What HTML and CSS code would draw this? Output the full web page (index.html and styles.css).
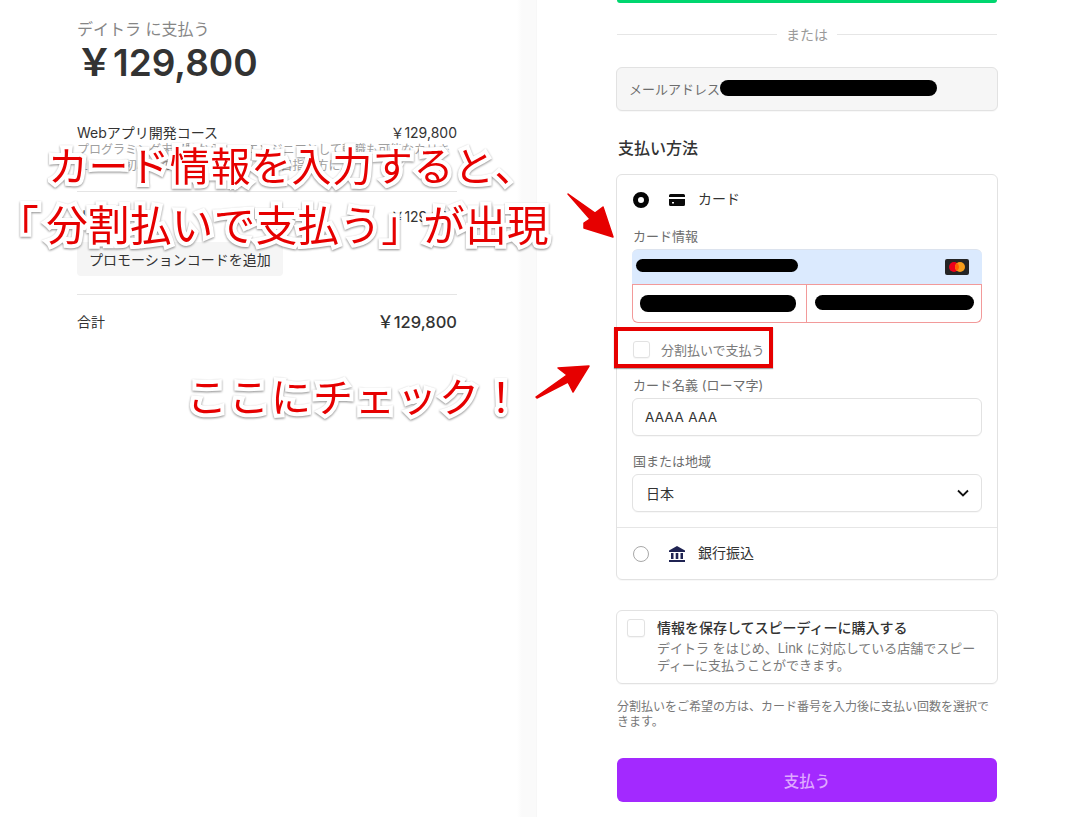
FILE: index.html
```html
<!DOCTYPE html>
<html lang="ja">
<head>
<meta charset="utf-8">
<title>デイトラ 支払い</title>
<link rel="stylesheet" href="styles.css">
</head>
<body>
<div class="page">
  <section class="summary">
    <p class="pay-to">デイトラ に支払う</p>
    <p class="total-big">￥129,800</p>
    <div class="item">
      <div class="row"><span>Webアプリ開発コース</span><span>￥129,800</span></div>
      <p class="item-desc">プログラミング未経験からWebエンジニアとして転職も可能なカリキュラム。初心者の方やフリーランスを目指す方に…</p>
    </div>
    <div class="subtotal">
      <div class="row"><span>小計</span><span>￥129,800</span></div>
      <button class="promo">プロモーションコードを追加</button>
    </div>
    <div class="row grand"><span>合計</span><span class="grand-price">￥129,800</span></div>
  </section>

  <section class="checkout">
    <div class="wallet-bar"></div>
    <div class="or"><span>または</span></div>
    <div class="email">メールアドレス<span class="redact redact-email"></span></div>
    <h2 class="method-title">支払い方法</h2>
    <div class="methods">
      <div class="method-head">
        <span class="radio radio-on"></span>
        <svg class="method-icon" viewBox="0 0 16 12"><path d="M1.5 0h13A1.5 1.5 0 0 1 16 1.5V3H0V1.500A1.500 1.500 0 0 1 1.500 0zM0 5h16v5.500a1.500 1.500 0 0 1-1.500 1.500h-13A1.500 1.500 0 0 1 0 10.500zM3 8v1.500h2V8z" fill="#0a0a0a"/></svg>
        <span class="method-text">カード</span>
      </div>
      <div class="card-form">
        <label class="field-label">カード情報</label>
        <div class="card-inputs">
          <div class="card-number">
            <span class="redact redact-number"></span>
            <svg class="mc" viewBox="0 0 24 16"><rect width="24" height="16" rx="2" fill="#252525"/><circle cx="9" cy="8" r="5" fill="#eb001b"/><circle cx="15" cy="8" r="5" fill="#f79e1b"/><path d="M12 4a5 5 0 0 1 0 8 5 5 0 0 1 0-8z" fill="#ff5f00"/></svg>
          </div>
          <div class="card-split">
            <div class="card-cell"><span class="redact redact-exp"></span></div>
            <div class="card-cell"><span class="redact redact-cvc"></span></div>
          </div>
        </div>
        <div class="installment">
          <span class="check"></span>
          <span>分割払いで支払う</span>
        </div>
        <label class="field-label name-label">カード名義 (ローマ字)</label>
        <div class="input name-input">AAAA AAA</div>
        <label class="field-label country-label">国または地域</label>
        <div class="input select">
          <span>日本</span>
          <svg class="chevron" viewBox="0 0 12 8"><path d="M1 1.500l5 5 5-5" fill="none" stroke="#111" stroke-width="1.800"/></svg>
        </div>
      </div>
      <div class="method-head method-bank">
        <span class="radio"></span>
        <svg class="method-icon bank" viewBox="0 0 16 16"><path d="M8 0l8 4.500V6H0V4.500zM2 7h2.500v6H2zM6.700 7h2.600v6H6.700zM11.500 7H14v6h-2.500zM0 14h16v2H0z" fill="#1f2352"/></svg>
        <span class="method-text">銀行振込</span>
      </div>
    </div>
    <div class="save">
      <span class="check check-save"></span>
      <div>
        <p class="save-title">情報を保存してスピーディーに購入する</p>
        <p class="save-desc">デイトラ をはじめ、Link に対応している店舗でスピーディーに支払うことができます。</p>
      </div>
    </div>
    <p class="note">分割払いをご希望の方は、カード番号を入力後に支払い回数を選択できます。</p>
    <button class="pay">支払う</button>
  </section>
</div>

<div class="callout callout-1">カード情報を入力すると、</div>
<div class="callout callout-2"><span class="open-bracket">「</span>分割払いで支払う」が出現</div>
<div class="callout callout-3">ここにチェック！</div>
<div class="highlight"></div>
<svg class="arrows" viewBox="0 0 1072 817">
  <path d="M568 194L595 213L603 207L613 237L584 228L584 223L590 219Z" fill="#e60000" stroke="#e60000" stroke-width="1.500" stroke-linejoin="round"/>
  <path d="M536 397L567 375L558 368L589 366L573 392L568 382L537 398Z" fill="#e60000" stroke="#e60000" stroke-width="1.500" stroke-linejoin="round"/>
</svg>
</body>
</html>
```
FILE: styles.css
```css
* { box-sizing: border-box; }
html, body { margin: 0; padding: 0; height: 817px; overflow: hidden; background: #fff; }
body {
  position: relative;
  font-family: Inter, "Noto Sans CJK JP", sans-serif;
  color: #1f1f1f;
  font-size: 14px;
}
p, h2 { margin: 0; }
.page { display: flex; height: 817px; }

/* left */
.summary {
  width: 537px;
  padding: 20px 80px 0 77px;
  background: linear-gradient(90deg, #fff 517px, #fafafa 522px, #fafafa 536px, #f4f4f4 537px);
}
.pay-to { font-size: 16px; line-height: 18px; color: #868686; }
.total-big { font-size: 37px; font-weight: 600; line-height: 44px; color: #333; margin-top: 3px; margin-left: -1px; }
.row { display: flex; justify-content: space-between; line-height: 16px; color: #333; }
.item { margin-top: 40px; height: 67px; border-bottom: 1px solid #e5e5e5; }
.item-desc { width: 380px; margin-top: 1px; font-size: 12px; line-height: 16px; color: #a0a0a0; }
.subtotal { padding-top: 17px; height: 103px; border-bottom: 1px solid #e5e5e5; }
.promo {
  display: block; margin-top: 17px; width: 206px; height: 34px; padding: 0 0 0 12px;
  border: 0; border-radius: 4px; background: #f5f5f5; text-align: left;
  font: inherit; color: #333;
}
.grand { margin-top: 18px; align-items: center; height: 18px; }
.grand-price { font-size: 16.500px; font-weight: 500; color: #333; }

/* right */
.checkout { width: 380px; margin-left: 80px; }
.wallet-bar { height: 3px; background: #00d66f; border-radius: 0 0 4px 4px; }
.or { display: flex; align-items: center; gap: 9px; margin-top: 22px; height: 18px; color: #9a9a9a; font-size: 14px; }
.or::before, .or::after { content: ""; flex: 1; height: 1px; background: #e6e6e6; }
.email {
  display: flex; align-items: center; height: 44px; margin: 24px -1px 0; padding: 0 0 2px 12px;
  background: #f6f6f6; border: 1px solid #e2e2e2; border-radius: 6px; color: #6d6d6d; font-size: 13px;
  box-shadow: 0 1px 1px rgba(0,0,0,.03);
}
.redact { display: block; background: #000; border-radius: 8px; }
.redact-email { width: 217px; height: 16px; }
.method-title { margin-top: 27px; font-size: 16px; font-weight: 500; line-height: 20px; color: #333; padding-left: 1px; }
.methods {
  margin: 16px -1px 0; height: 406px; border: 1px solid #e2e2e2; border-radius: 6px;
  box-shadow: 0 1px 1px rgba(0,0,0,.03);
}
.method-head { display: flex; align-items: center; height: 49px; padding-left: 16px; color: #333; }
.method-text { margin-top: -3px; }
.radio { width: 16px; height: 16px; border-radius: 50%; border: 1px solid #a8a8a8; flex: none; }
.radio-on { border: 5px solid #050505; }
.method-icon { width: 16px; height: 12px; margin-left: 20px; margin-right: 13px; flex: none; }
.bank { height: 16px; }
.card-form { padding: 0 15px; height: 304px; border-bottom: 1px solid #e6e6e6; }
.field-label { display: block; font-size: 13px; line-height: 16px; color: #6d6d6d; padding-left: 1px; }
.card-form > .field-label:first-child { padding-top: 4px; height: 21px; }
.card-inputs { margin-top: 4px; height: 74px; }
.card-number {
  display: flex; align-items: center; justify-content: space-between; height: 36px;
  padding: 0 13px 0 4px; background: #dbeafe; border-bottom: 1px solid #f29a9a;
  border-top: 1px solid #dce3ee; border-radius: 6px 6px 0 0;
}
.redact-number { width: 162px; height: 13px; margin-top: -4px; }
.mc { width: 24px; height: 16px; }
.card-split { display: flex; height: 38px; border: 1px solid #f29a9a; border-top: 0; border-radius: 0 0 6px 6px; }
.card-cell { flex: 1; display: flex; align-items: center; padding: 0 7px; }
.card-cell + .card-cell { border-left: 1px solid #f29a9a; padding-left: 8px; }
.redact-exp { width: 156px; height: 17px; }
.redact-cvc { width: 159px; height: 15px; margin-top: -3px; }
.installment { display: flex; align-items: center; gap: 11px; height: 18px; margin-top: 17px; padding-left: 1px; font-size: 13px; color: #7b7b7b; }
.check { display: block; width: 17px; height: 17px; border: 1px solid #e2e2e2; border-radius: 3px; background: #fff; box-shadow: 0 1px 1px rgba(0,0,0,.04); flex: none; }
.name-label { margin-top: 19px; }
.input {
  display: flex; align-items: center; justify-content: space-between; height: 38px;
  margin-top: 5px; padding: 0 13px; background: #fff; border: 1px solid #e2e2e2; border-radius: 6px;
  color: #333; box-shadow: 0 1px 1px rgba(0,0,0,.03);
}
.name-input { font-size: 13.500px; letter-spacing: .3px; padding-left: 12px; }
.country-label { margin-top: 17px; }
.select { margin-top: 5px; }
.chevron { width: 12px; height: 8px; margin-right: -1px; }
.method-bank { height: 51px; }
.save {
  display: flex; gap: 11px; height: 74px; margin: 30px -1px 0; padding: 8px 10px;
  border: 1px solid #e2e2e2; border-radius: 6px; box-shadow: 0 1px 1px rgba(0,0,0,.03);
}
.check-save { width: 18px; height: 18px; margin-right: 1px; }
.save-title { font-size: 14px; font-weight: 500; line-height: 18px; color: #333; }
.save-desc { margin-top: 3px; font-size: 13px; line-height: 17px; color: #7b7b7b; width: 322px; }
.note { margin-top: 15px; font-size: 12px; line-height: 15px; color: #777; }
.pay {
  display: block; width: 100%; height: 44px; margin-top: 29px; padding: 0;
  border: 0; border-radius: 6px; background: #a329ff; color: #dfa8ff;
  font: 500 15.500px Inter, "Noto Sans CJK JP", sans-serif;
}

/* annotations */
.callout {
  position: absolute; white-space: nowrap; color: #e60000; font-weight: 400;
  font-family: "Noto Sans CJK JP", sans-serif;
  font-kerning: none;
  -webkit-text-stroke: 8px #fff; paint-order: stroke fill;
  filter: drop-shadow(0 1px 1px rgba(0,0,0,.45));
  line-height: 1;
}
.callout-1 { left: 48px; top: 144px; font-size: 40px; letter-spacing: .6px; }
.callout-2 { left: 18px; top: 203px; font-size: 41.500px; letter-spacing: .4px; }
.open-bracket { font-feature-settings: "halt"; margin-right: 7px; }
.callout-3 { left: 187px; top: 375px; font-size: 40px; letter-spacing: 2px; }
.highlight {
  position: absolute; left: 614px; top: 327px; width: 159px; height: 41px;
  border: 4px solid #e60000; box-shadow: 0 1px 1px rgba(0,0,0,.35);
}
.arrows { position: absolute; left: 0; top: 0; width: 1072px; height: 817px; pointer-events: none; }
```
